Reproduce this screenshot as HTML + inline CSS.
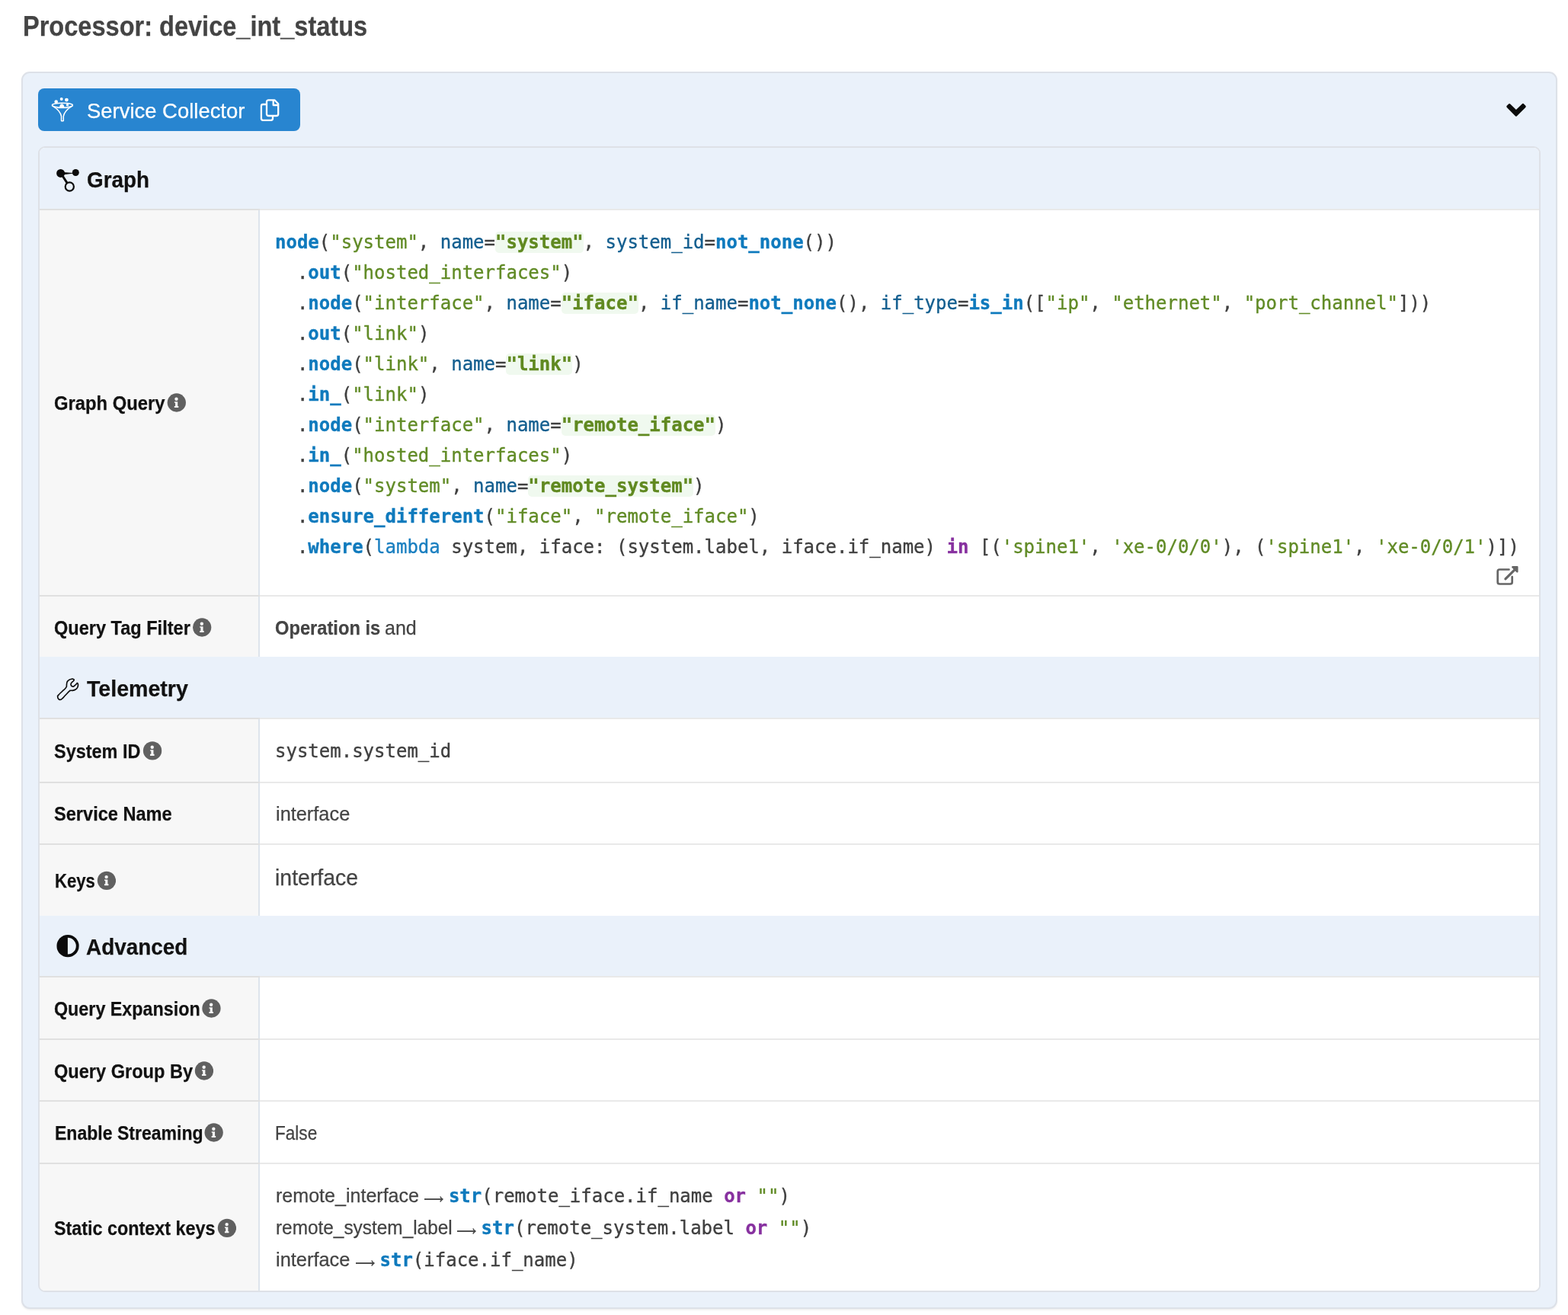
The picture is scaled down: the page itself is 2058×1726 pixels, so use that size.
<!DOCTYPE html>
<html lang="en">
<head>
<meta charset="utf-8">
<title>Processor: device_int_status</title>
<style>
*{box-sizing:border-box}
html,body{margin:0;padding:0}
body{width:2058px;height:1726px;overflow:hidden;background:#fff;position:relative;will-change:transform;
  font-family:"Liberation Sans",sans-serif;font-size:26px;line-height:1;color:#444}
.t{position:absolute;display:block;white-space:pre;line-height:1;transform-origin:0 50%;-webkit-text-stroke:.25px currentColor}
.ic,.info,.ar,.ext,.chev{position:absolute;display:block}
h1.title{margin:0;font-size:36px;font-weight:700;color:#444}
.panel{position:absolute;left:28px;top:94px;width:2016px;height:1624px;border:2px solid #dde1e8;border-radius:11px;background:#eaf1fa;box-shadow:0 2px 3px -1px rgba(34,36,38,.11)}
.btn{position:absolute;left:20px;top:20px;width:344px;height:56px;border-radius:8px;background:#2885d0;color:#fff;font-size:28px}
.table{position:absolute;left:20px;top:96px;width:1972px;height:1504px;border:2px solid #dee1e7;border-radius:9px;background:#fff;overflow:hidden}
.sec{position:relative;background:#eaf1fa;font-size:30px;font-weight:700;color:#111}
.row{position:relative;display:flex}
.row{border-top:2px solid #e9e9e9}
.row .label{box-shadow:0 -2px 0 #e0e0e0}
.label{position:relative;flex:0 0 289px;background:#f7f7f7;border-right:2px solid #dee4ec;font-weight:700;color:#111}
.value{position:relative;flex:1 1 auto;background:#fff}
pre,code{font-family:"DejaVu Sans Mono",monospace;font-size:24px;margin:0;color:#3f3f3f;-webkit-text-stroke:.35px currentColor}
b{font-weight:700}
pre.q{position:absolute;left:20px;top:22px;line-height:40px}
code.sid{position:absolute;left:20px;top:28px;line-height:28px}
code.kc{position:absolute;line-height:28px;white-space:pre}
.f{color:#0f7abd;font-weight:700}
.k{color:#135e8f}
.s{color:#618b26}
.n{color:#608920;font-weight:700;background:#f0f9ef;border-radius:5px}
.p{color:#87309f;font-weight:700}
.l{color:#1a7fc0}
</style>
</head>
<body>
<h1 class="title"><span class="t" id="title" style="left:29.77px;top:17px;transform:scaleX(0.9039)">Processor: device_int_status</span></h1>
<section class="panel">
  <div class="btn"><svg class="ic" style="left:12px;top:6px" width="40" height="42" viewBox="0 0 40 42" aria-hidden="true"><g fill="none" stroke="#fff" stroke-width="1.5" stroke-linecap="round" stroke-linejoin="round"><ellipse cx="19.9" cy="16.1" rx="13.5" ry="2.9"/><path d="M6.6 16.9C11 19.5 17.2 24 18.5 30.5V36.2a.6 .6 0 0 0 .6 .6h1.6a.6 .6 0 0 0 .6-.6V30.5C22.6 24 28.800 19.500 33.200 16.900"/><path d="M13.400 19.800H26.400" stroke-width="1.100" opacity=".8"/></g><g fill="#fff"><circle cx="11.7" cy="11.5" r="2.3"/><circle cx="18.7" cy="8" r="2"/><circle cx="25.4" cy="9.1" r="2.4"/><path d="M16 19.600c0-3 1.300-5.300 3.200-5.300s3.200 2.300 3.200 5.300z"/><circle cx="26.500" cy="15.700" r="1.700"/></g></svg><span class="t" id="btn" style="left:63.55px;top:16px;transform:scaleX(0.9799)">Service Collector</span><svg class="ic" style="left:290px;top:12px" width="28" height="32" viewBox="0 0 28 32" aria-hidden="true"><g fill="none" stroke="#fff" stroke-width="2.3" stroke-linejoin="round"><path d="M12.3 3.3H20.3L25.2 8.2V21.700a2.300 2.300 0 0 1-2.300 2.300H12.300a2.300 2.300 0 0 1-2.300-2.300V5.600a2.300 2.300 0 0 1 2.300-2.300z"/><path d="M18.700 3.300V10H25.200"/><path d="M10 9H5.200a2.300 2.300 0 0 0-2.300 2.300V27.500a2.300 2.300 0 0 0 2.300 2.300H15.700a2.300 2.300 0 0 0 2.300-2.300V24"/></g></svg></div>
  <svg class="chev" style="left:1935px;top:24px" width="50" height="50" viewBox="0 0 50 50" aria-hidden="true"><path d="M13.81 19.83 16.13 17.48 24.9 26.12 33.98 17.45 36.26 19.83 24.9 31.1z" fill="#0b0b0b" stroke="#0b0b0b" stroke-width="3" stroke-linejoin="round"/></svg>
  <div class="table">
    <div class="sec" style="height:80px"><svg class="ic" style="left:14px;top:18px" width="46" height="46" viewBox="0 0 46 46" aria-hidden="true"><path d="M17.500 14.100 29.500 14.900 29.500 15.800 17.500 17.200z" fill="#0b0b0b"/><path d="M16.500 19.500 22 28" stroke="#0b0b0b" stroke-width="3" fill="none"/><circle cx="13.600" cy="15.460" r="5.460" fill="#0b0b0b"/><circle cx="33.300" cy="14.500" r="4.500" fill="#0b0b0b"/><circle cx="25.300" cy="33.050" r="5.600" fill="none" stroke="#0b0b0b" stroke-width="2.200"/></svg><span class="t" id="sGraph" style="left:61.69px;top:27px;transform:scaleX(0.9274)">Graph</span></div>
    <div class="row bt" style="height:507px"><div class="label"><span class="t" id="lGQ" style="left:19.44px;top:240px;transform:scaleX(0.9150)">Graph Query</span><svg class="info" style="left:166px;top:239px" width="26" height="26" viewBox="0 0 26 26" aria-hidden="true"><g transform="translate(0.8 0.5)"><circle cx="13" cy="13" r="12.150" fill="#606060"/><circle cx="12.700" cy="8.300" r="2.200" fill="#f7f7f7"/><path fill="#f7f7f7" d="M10.100 11.800H14.400V17.450H15.500V19.500H10V17.450H11.260V13.300H10.100z"/></g></svg></div><div class="value"><pre class="q"><span class="f">node</span>(<span class="s">"system"</span>, <span class="k">name</span>=<span class="n">"system"</span>, <span class="k">system_id</span>=<span class="f">not_none</span>())
  .<span class="f">out</span>(<span class="s">"hosted_interfaces"</span>)
  .<span class="f">node</span>(<span class="s">"interface"</span>, <span class="k">name</span>=<span class="n">"iface"</span>, <span class="k">if_name</span>=<span class="f">not_none</span>(), <span class="k">if_type</span>=<span class="f">is_in</span>([<span class="s">"ip"</span>, <span class="s">"ethernet"</span>, <span class="s">"port_channel"</span>]))
  .<span class="f">out</span>(<span class="s">"link"</span>)
  .<span class="f">node</span>(<span class="s">"link"</span>, <span class="k">name</span>=<span class="n">"link"</span>)
  .<span class="f">in_</span>(<span class="s">"link"</span>)
  .<span class="f">node</span>(<span class="s">"interface"</span>, <span class="k">name</span>=<span class="n">"remote_iface"</span>)
  .<span class="f">in_</span>(<span class="s">"hosted_interfaces"</span>)
  .<span class="f">node</span>(<span class="s">"system"</span>, <span class="k">name</span>=<span class="n">"remote_system"</span>)
  .<span class="f">ensure_different</span>(<span class="s">"iface"</span>, <span class="s">"remote_iface"</span>)
  .<span class="f">where</span>(<span class="l">lambda</span> system, iface: (system.label, iface.if_name) <span class="p">in</span> [(<span class="s">'spine1'</span>, <span class="s">'xe-0/0/0'</span>), (<span class="s">'spine1'</span>, <span class="s">'xe-0/0/1'</span>)])</pre><svg class="ext" style="left:1614px;top:456px" width="46" height="46" viewBox="0 0 46 46" aria-hidden="true"><g fill="none" stroke="#666" stroke-width="2.700" stroke-linecap="round" stroke-linejoin="round"><path d="M25.500 15.500H13.200a2.500 2.500 0 0 0-2.500 2.500V32a2.500 2.500 0 0 0 2.500 2.500H27.200a2.500 2.500 0 0 0 2.500-2.500V25.200"/><path d="M20.900 27.900 33.500 15.300" stroke-width="3.200"/><path d="M30.200 12.200H36.400V18.400z" fill="#666" stroke-width="2.300"/></g></svg></div></div>
    <div class="row bt" style="height:81px"><div class="label"><span class="t" id="lQTF" style="left:19.44px;top:28px;transform:scaleX(0.9055)">Query Tag Filter</span><svg class="info" style="left:200px;top:27px" width="26" height="26" viewBox="0 0 26 26" aria-hidden="true"><g transform="translate(0.15 0.5)"><circle cx="13" cy="13" r="12.150" fill="#606060"/><circle cx="12.700" cy="8.300" r="2.200" fill="#f7f7f7"/><path fill="#f7f7f7" d="M10.100 11.800H14.400V17.450H15.500V19.500H10V17.450H11.260V13.300H10.100z"/></g></svg></div><div class="value"><b class="t" id="vOp" style="left:19.72px;top:28px;transform:scaleX(0.9112)">Operation is</b><span class="t" id="vAnd" style="left:164.22px;top:28px;transform:scaleX(0.9626)">and</span></div></div>
    <div class="sec" style="height:80px"><svg class="ic" style="left:14px;top:18px" width="46" height="46" viewBox="0 0 46 46" aria-hidden="true"><path d="M10.66 32.38C12.6 30 12.31 30.74 15.6 27.5C18.89 24.26 18.57 25.6 20.52 22.65C22.47 19.7 21.01 20.88 21.46 18.66C21.91 16.44 21.28 17.69 21.86 16C22.44 14.31 21.95 14.93 23.19 13.59C24.43 12.25 23.81 12.79 25.59 11.99C27.37 11.19 26.83 11.28 28.52 11.19C30.21 11.1 29.85 11.11 30.65 11.73C31.45 12.35 31.54 11.91 30.92 13.06C30.3 14.21 30.02 13.77 28.78 15.19C27.54 16.61 27.63 15.81 27.19 17.32C26.75 18.83 26.92 18.56 27.45 19.72C27.98 20.88 27.71 20.39 28.78 20.79C29.85 21.19 29.49 21.28 30.65 20.92C31.81 20.56 30.92 20.92 32.25 19.72C33.58 18.52 33.58 18.39 34.65 17.32C35.72 16.25 34.92 16.43 35.45 16.52C35.98 16.61 35.94 16.43 36.25 17.59C36.56 18.75 36.65 18.3 36.38 19.99C36.11 21.68 36.47 21.05 35.45 22.65C34.43 24.25 35.1 23.63 33.32 24.79C31.54 25.95 32.34 25.59 30.12 26.12C27.9 26.65 28.43 25.95 26.65 26.39C24.87 26.83 27.05 25.41 24.79 27.45C22.53 29.49 22.88 29.41 19.86 32.52C16.84 35.63 17.99 34.84 15.72 36.78C13.45 38.72 14.75 38.15 13.06 38.33C11.37 38.51 11.75 38.54 10.66 37.31C9.57 36.08 9.78 36.29 9.78 34.65C9.78 33.01 8.72 34.76 10.66 32.38z" fill="none" stroke="#0b0b0b" stroke-width="1.650" stroke-linejoin="round"/></svg><span class="t" id="sTele" style="left:62.16px;top:27px;transform:scaleX(0.9518)">Telemetry</span></div>
    <div class="row bt" style="height:84px"><div class="label"><span class="t" id="lSID" style="left:19.44px;top:29px;transform:scaleX(0.9013)">System ID</span><svg class="info" style="left:135px;top:28px" width="26" height="26" viewBox="0 0 26 26" aria-hidden="true"><g transform="translate(0.05 0.4)"><circle cx="13" cy="13" r="12.150" fill="#606060"/><circle cx="12.700" cy="8.300" r="2.200" fill="#f7f7f7"/><path fill="#f7f7f7" d="M10.100 11.800H14.400V17.450H15.500V19.500H10V17.450H11.260V13.300H10.100z"/></g></svg></div><div class="value"><code class="sid">system.system_id</code></div></div>
    <div class="row bt" style="height:81px"><div class="label"><span class="t" id="lSN" style="left:18.97px;top:27px;transform:scaleX(0.9069)">Service Name</span></div><div class="value"><span class="t" id="vSN" style="left:20.69px;top:27px;transform:scaleX(0.9750)">interface</span></div></div>
    <div class="row bt" style="height:95px"><div class="label"><span class="t" id="lKeys" style="left:20.41px;top:34px;transform:scaleX(0.8499)">Keys</span><svg class="info" style="left:74px;top:33px" width="26" height="26" viewBox="0 0 26 26" aria-hidden="true"><g transform="translate(0.95 0.8)"><circle cx="13" cy="13" r="12.150" fill="#606060"/><circle cx="12.700" cy="8.300" r="2.200" fill="#f7f7f7"/><path fill="#f7f7f7" d="M10.100 11.800H14.400V17.450H15.500V19.500H10V17.450H11.260V13.300H10.100z"/></g></svg></div><div class="value"><span class="t" id="vKeys" style="font-size:28.6px;left:19.92px;top:29px;transform:scaleX(0.9954)">interface</span></div></div>
    <div class="sec" style="height:79px"><svg class="ic" style="left:14px;top:17px" width="46" height="46" viewBox="0 0 46 46" aria-hidden="true"><circle cx="23.050" cy="22.650" r="14.600" fill="#0b0b0b"/><path d="M22.900 11.750a10.900 10.900 0 0 1 0 21.800z" fill="#eaf1fa"/></svg><span class="t" id="sAdv" style="left:60.55px;top:26px;transform:scaleX(0.9304)">Advanced</span></div>
    <div class="row bt" style="height:82px"><div class="label"><span class="t" id="lQE" style="left:19.47px;top:28px;transform:scaleX(0.8962)">Query Expansion</span><svg class="info" style="left:212px;top:27px" width="26" height="26" viewBox="0 0 26 26" aria-hidden="true"><g transform="translate(0.45 0.5)"><circle cx="13" cy="13" r="12.150" fill="#606060"/><circle cx="12.700" cy="8.300" r="2.200" fill="#f7f7f7"/><path fill="#f7f7f7" d="M10.100 11.800H14.400V17.450H15.500V19.500H10V17.450H11.260V13.300H10.100z"/></g></svg></div><div class="value"></div></div>
    <div class="row bt" style="height:81px"><div class="label"><span class="t" id="lQGB" style="left:19.27px;top:28px;transform:scaleX(0.9068)">Query Group By</span><svg class="info" style="left:202px;top:27px" width="26" height="26" viewBox="0 0 26 26" aria-hidden="true"><g transform="translate(0.95 0.5)"><circle cx="13" cy="13" r="12.150" fill="#606060"/><circle cx="12.700" cy="8.300" r="2.200" fill="#f7f7f7"/><path fill="#f7f7f7" d="M10.100 11.800H14.400V17.450H15.500V19.500H10V17.450H11.260V13.300H10.100z"/></g></svg></div><div class="value"></div></div>
    <div class="row bt" style="height:82px"><div class="label"><span class="t" id="lES" style="left:19.72px;top:28px;transform:scaleX(0.8861)">Enable Streaming</span><svg class="info" style="left:215px;top:27px" width="26" height="26" viewBox="0 0 26 26" aria-hidden="true"><g transform="translate(0.65 0.5)"><circle cx="13" cy="13" r="12.150" fill="#606060"/><circle cx="12.700" cy="8.300" r="2.200" fill="#f7f7f7"/><path fill="#f7f7f7" d="M10.100 11.800H14.400V17.450H15.500V19.500H10V17.450H11.260V13.300H10.100z"/></g></svg></div><div class="value"><span class="t" id="vES" style="left:19.75px;top:28px;transform:scaleX(0.8685)">False</span></div></div>
    <div class="row bt" style="height:168px"><div class="label"><span class="t" id="lSCK" style="left:19.22px;top:71px;transform:scaleX(0.8980)">Static context keys</span><svg class="info" style="left:232px;top:70px" width="26" height="26" viewBox="0 0 26 26" aria-hidden="true"><g transform="translate(0.95 0.8)"><circle cx="13" cy="13" r="12.150" fill="#606060"/><circle cx="12.700" cy="8.300" r="2.200" fill="#f7f7f7"/><path fill="#f7f7f7" d="M10.100 11.800H14.400V17.450H15.500V19.500H10V17.450H11.260V13.300H10.100z"/></g></svg></div><div class="value"><div class="ck"><span class="t" id="k1" style="left:20.58px;top:28px;transform:scaleX(0.9637)">remote_interface</span><svg class="ar" style="left:215.2px;top:40.2px" width="28" height="12" viewBox="0 0 28 12" aria-hidden="true"><path d="M1 6H24.500" stroke="#444" stroke-width="1.850" fill="none"/><path d="M21.800 2.500C22.600 4.200 23.600 5.300 25 6C23.600 6.700 22.600 7.800 21.800 9.500" stroke="#444" stroke-width="1.500" fill="none" stroke-linejoin="round"/></svg><code class="kc" style="left:247.9px;top:28px"><span class="f">str</span>(remote_iface.if_name <span class="p">or</span> <span class="s">""</span>)</code></div>
        <div class="ck"><span class="t" id="k2" style="left:20.55px;top:70px;transform:scaleX(0.9376)">remote_system_label</span><svg class="ar" style="left:258.1px;top:82.3px" width="28" height="12" viewBox="0 0 28 12" aria-hidden="true"><path d="M1 6H24.500" stroke="#444" stroke-width="1.850" fill="none"/><path d="M21.800 2.500C22.600 4.200 23.600 5.300 25 6C23.600 6.700 22.600 7.800 21.800 9.500" stroke="#444" stroke-width="1.500" fill="none" stroke-linejoin="round"/></svg><code class="kc" style="left:290.6px;top:70px"><span class="f">str</span>(remote_system.label <span class="p">or</span> <span class="s">""</span>)</code></div>
        <div class="ck"><span class="t" id="k3" style="left:20.83px;top:112px;transform:scaleX(0.9765)">interface</span><svg class="ar" style="left:124.8px;top:124.3px" width="28" height="12" viewBox="0 0 28 12" aria-hidden="true"><path d="M1 6H24.500" stroke="#444" stroke-width="1.850" fill="none"/><path d="M21.800 2.500C22.600 4.200 23.600 5.300 25 6C23.600 6.700 22.600 7.800 21.800 9.500" stroke="#444" stroke-width="1.500" fill="none" stroke-linejoin="round"/></svg><code class="kc" style="left:157.5px;top:112px"><span class="f">str</span>(iface.if_name)</code></div></div></div>
  </div>
</section>
</body>
</html>
